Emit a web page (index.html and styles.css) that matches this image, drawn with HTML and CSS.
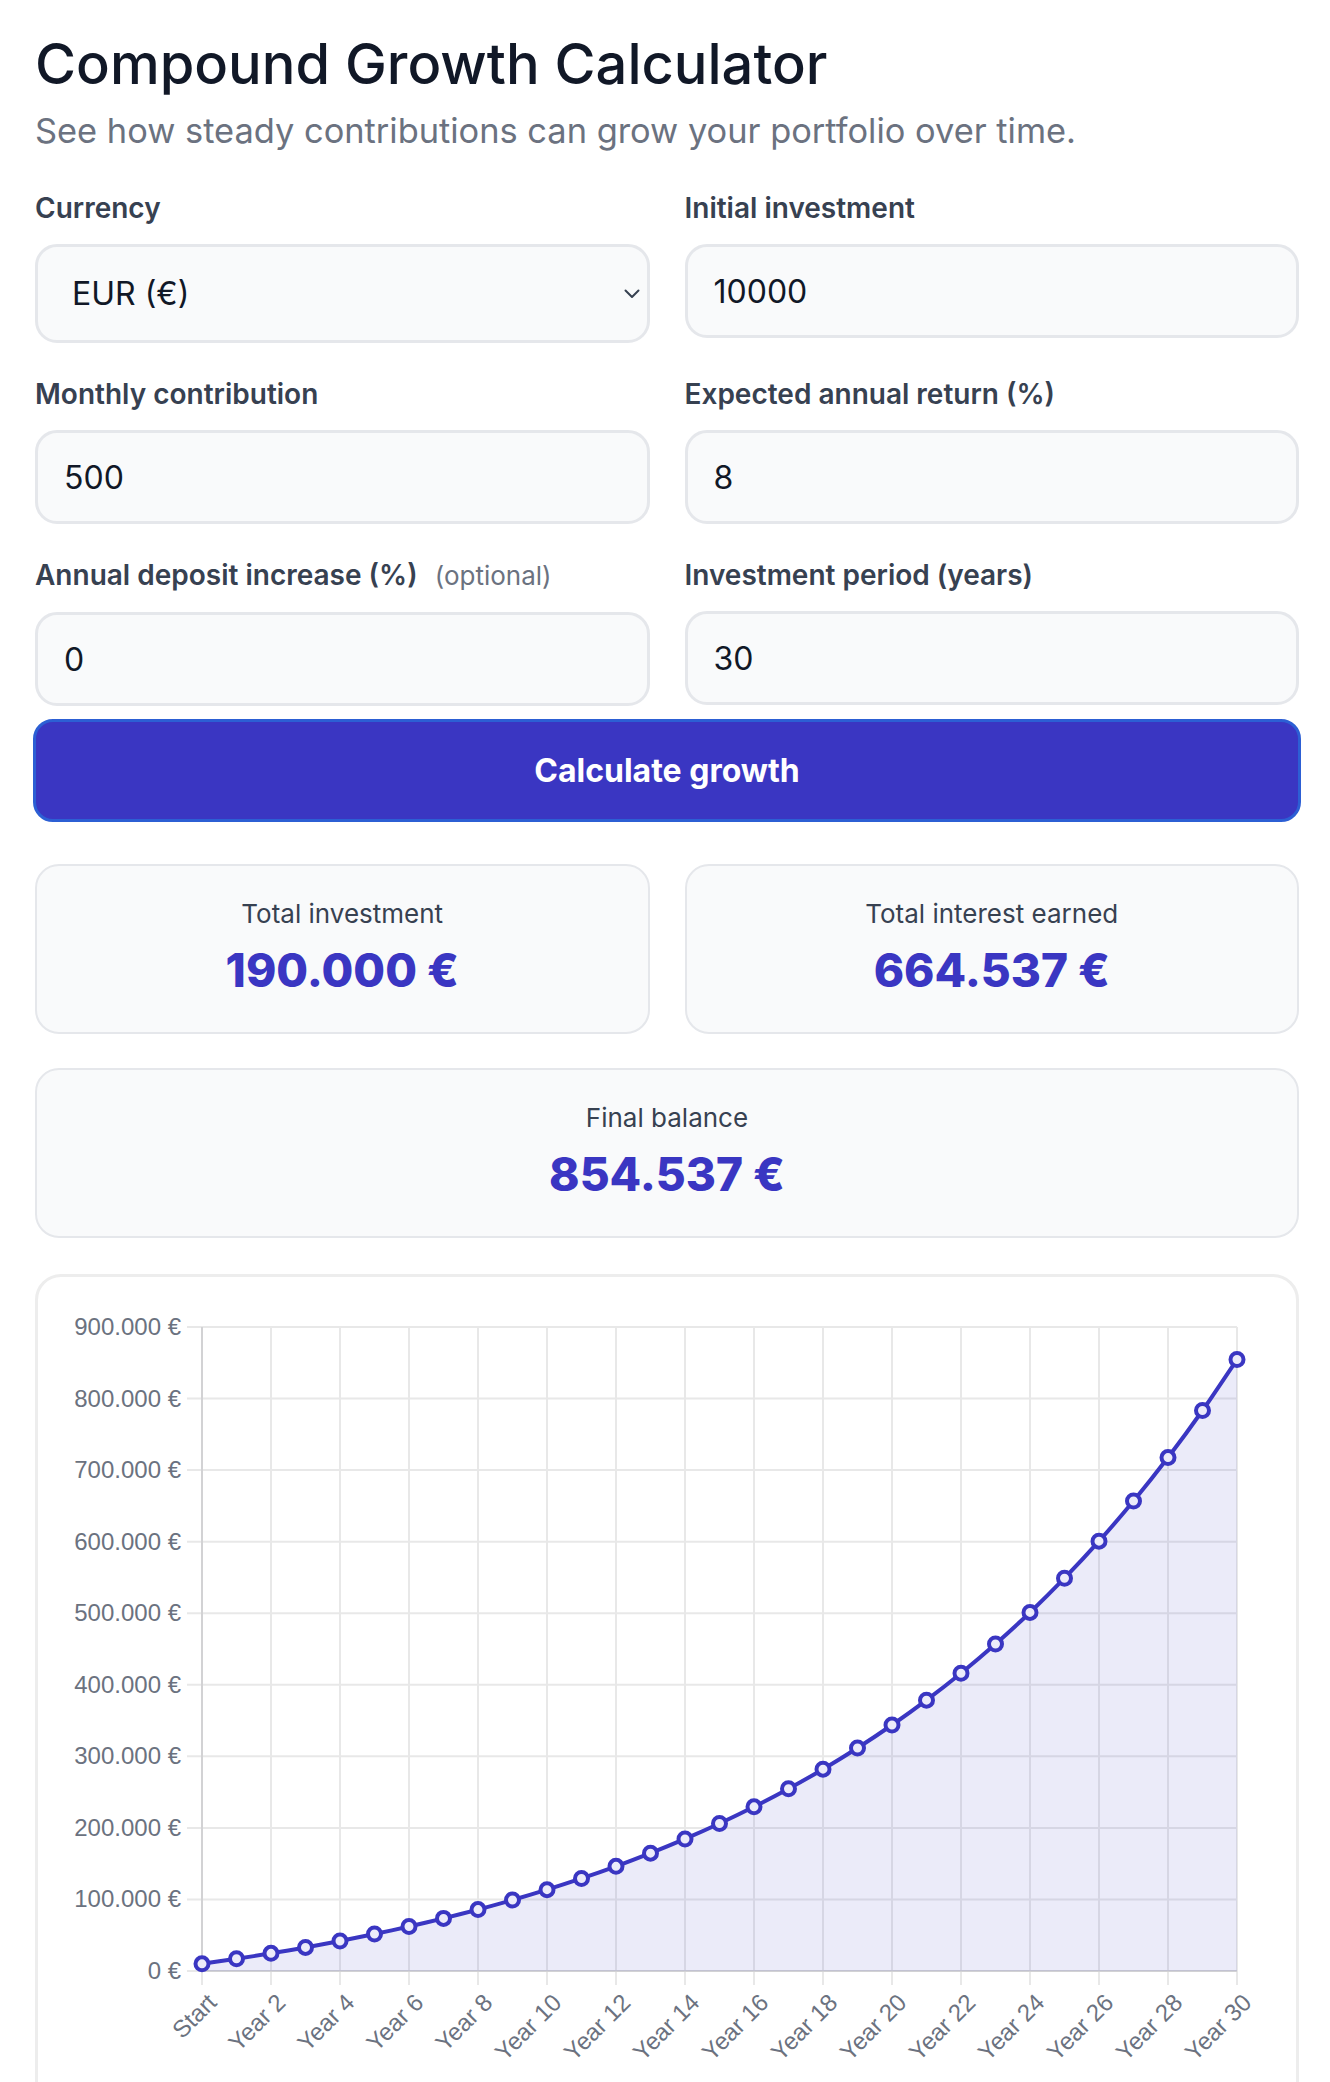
FILE: index.html
```html
<!DOCTYPE html>
<html lang="en">
<head>
  <meta charset="UTF-8">
  <title>Compound Growth Calculator</title>
  <link rel="stylesheet" href="styles.css">
</head>
<body>

<div class="page">
  <h1 class="title">Compound Growth Calculator</h1>
  <p class="subtitle">See how steady contributions can grow your portfolio over time.</p>

  <!-- Form -->
  <form class="form-grid" onsubmit="return false">
    <div class="field">
      <label for="currency">Currency</label>
      <div class="select-wrap">
        <select id="currency" class="input select">
          <option>EUR (€)</option>
          <option>USD ($)</option>
          <option>GBP (£)</option>
        </select>
        <svg class="chevron" width="16" height="10" viewBox="0 0 16 10"><path d="M1.5 1.5 L8 8 L14.5 1.5" fill="none" stroke="#374151" stroke-width="2" stroke-linecap="round" stroke-linejoin="round"/></svg>
      </div>
    </div>
    <div class="field">
      <label for="initial">Initial investment</label>
      <input id="initial" class="input" type="text" value="10000">
    </div>
    <div class="field">
      <label for="monthly">Monthly contribution</label>
      <input id="monthly" class="input" type="text" value="500">
    </div>
    <div class="field">
      <label for="rate">Expected annual return (%)</label>
      <input id="rate" class="input" type="text" value="8">
    </div>
    <div class="field">
      <label for="increase">Annual deposit increase (%) <span class="optional">(optional)</span></label>
      <input id="increase" class="input" type="text" value="0">
    </div>
    <div class="field">
      <label for="years">Investment period (years)</label>
      <input id="years" class="input" type="text" value="30">
    </div>
  </form>

  <button class="calc-btn" type="button">Calculate growth</button>

  <!-- Results -->
  <div class="results">
    <div class="stat">
      <div class="stat-label">Total investment</div>
      <div class="stat-value">190.000 €</div>
    </div>
    <div class="stat">
      <div class="stat-label">Total interest earned</div>
      <div class="stat-value">664.537 €</div>
    </div>
  </div>
  <div class="stat stat-wide">
    <div class="stat-label">Final balance</div>
    <div class="stat-value">854.537 €</div>
  </div>

  <!-- Chart -->
  <div class="chart-card">
    <svg id="chart" class="chart" width="1210" height="830" viewBox="0 0 1210 830"></svg>
  </div>
</div>

<script>
  const NS = 'http://www.w3.org/2000/svg';
  const svg = document.getElementById('chart');

  // plot area inside the svg
  const L = 140, R = 1175, T = 26, B = 670;
  const MAX = 900000;
  const YEARS = 30;

  const initial = 10000, monthly = 500, rate = 0.08 / 12;

  function el(tag, attrs, parent) {
    const node = document.createElementNS(NS, tag);
    for (let k in attrs) node.setAttribute(k, attrs[k]);
    (parent || svg).appendChild(node);
    return node;
  }

  function fmt(n) {
    return String(Math.round(n)).replace(/\B(?=(\d{3})+(?!\d))/g, '.') + ' €';
  }

  const px = i => L + i * (R - L) / YEARS;
  const py = v => B - v / MAX * (B - T);

  // balance at end of each year, monthly compounding
  let values = [];
  for (let y = 0; y <= YEARS; y++) {
    const g = Math.pow(1 + rate, y * 12);
    values.push(initial * g + monthly * (g - 1) / rate);
  }
  const pts = values.map((v, i) => ({ x: px(i), y: py(v) }));

  // horizontal grid + y labels
  for (let k = 0; k <= 9; k++) {
    const y = py(k * 100000);
    el('line', { x1: L - 15, x2: R, y1: y, y2: y, class: 'grid' });
    const t = el('text', { x: L - 21, y: y + 8, class: 'tick', 'text-anchor': 'end' });
    t.textContent = fmt(k * 100000);
  }

  // vertical grid + x labels
  for (let i = 0; i <= YEARS; i += 2) {
    const x = px(i);
    el('line', { x1: x, x2: x, y1: T, y2: B + 14, class: 'grid' });
    const t = el('text', {
      transform: `translate(${x + 16} ${B + 33}) rotate(-45)`,
      class: 'tick', 'text-anchor': 'end'
    });
    t.textContent = i === 0 ? 'Start' : 'Year ' + i;
  }

  el('line', { x1: L, x2: L, y1: T, y2: B, class: 'axis' });
  el('line', { x1: L, x2: R, y1: B, y2: B, class: 'axis' });

  // smooth line, same idea as chart.js tension
  const tension = 0.3;
  let cps = pts.map((p, i) => {
    const prev = pts[i - 1] || p, next = pts[i + 1] || p;
    const d01 = Math.hypot(p.x - prev.x, p.y - prev.y);
    const d12 = Math.hypot(next.x - p.x, next.y - p.y);
    const s01 = d01 / (d01 + d12 || 1), s12 = d12 / (d01 + d12 || 1);
    return {
      inX: p.x - tension * s01 * (next.x - prev.x),
      inY: p.y - tension * s01 * (next.y - prev.y),
      outX: p.x + tension * s12 * (next.x - prev.x),
      outY: p.y + tension * s12 * (next.y - prev.y)
    };
  });

  let d = `M${pts[0].x} ${pts[0].y}`;
  for (let i = 1; i < pts.length; i++) {
    d += ` C${cps[i - 1].outX} ${cps[i - 1].outY} ${cps[i].inX} ${cps[i].inY} ${pts[i].x} ${pts[i].y}`;
  }

  el('path', { d: d + ` L${R} ${B} L${L} ${B} Z`, class: 'area' });
  el('path', { d: d, class: 'line' });

  pts.forEach(p => el('circle', { cx: p.x, cy: p.y, r: 6.5, class: 'point' }));
</script>

</body>
</html>
```

FILE: styles.css
```css
body {
  margin: 0;
  font-family: Inter, "Noto Sans", sans-serif;
  background: #fff;
  color: #111827;
}

.page {
  padding: 31px 31px 0 35px;
}

.title {
  margin: 0;
  font-size: 56px;
  font-weight: 500;
  line-height: 1.2;
  color: #111827;
}

.subtitle {
  margin: 8px 0 0;
  font-size: 34.4px;
  line-height: 1.45;
  color: #6b7280;
}

.form-grid {
  display: grid;
  grid-template-columns: 1fr 1fr;
  column-gap: 35px;
  row-gap: 35px;
  margin-top: 36px;
}

.field label {
  display: block;
  font-size: 28px;
  font-weight: 600;
  line-height: 32px;
  color: #374151;
  margin-bottom: 20px;
}

.optional {
  margin-left: 10px;
  font-size: 26px;
  font-weight: 400;
  color: #6b7280;
}

.input {
  display: block;
  width: 100%;
  height: 94px;
  box-sizing: border-box;
  padding: 0 26px;
  border: 3px solid #e5e7eb;
  border-radius: 22px;
  background: #f9fafb;
  font-family: Inter, "Noto Sans", sans-serif;
  font-size: 32px;
  color: #111827;
  outline: none;
}

.select-wrap {
  position: relative;
}

.select {
  height: 99px;
  padding-left: 34px;
  appearance: none;
  -webkit-appearance: none;
}

.chevron {
  position: absolute;
  right: 10px;
  top: 45px;
  pointer-events: none;
}

.calc-btn {
  display: block;
  width: calc(100% + 4px);
  height: 103px;
  margin: 13px -2px 0;
  border: 3px solid #2c5fd4;
  border-radius: 20px;
  background: #3a36c2;
  color: #fff;
  font-family: Inter, "Noto Sans", sans-serif;
  font-size: 32px;
  font-weight: 700;
  cursor: pointer;
}

.results {
  display: grid;
  grid-template-columns: 1fr 1fr;
  gap: 35px;
  margin-top: 42px;
}

.stat {
  padding: 28px 20px 34px;
  border: 2px solid #e5e7eb;
  border-radius: 24px;
  background: #f9fafb;
  text-align: center;
}

.stat-wide {
  margin-top: 34px;
}

.stat-label {
  font-size: 26px;
  line-height: 40px;
  color: #374151;
}

.stat-value {
  margin-top: 8px;
  font-size: 46px;
  font-weight: 800;
  line-height: 56px;
  color: #3a36c2;
}

.chart-card {
  margin-top: 36px;
  padding: 24px;
  border: 3px solid #ededed;
  border-radius: 26px;
  background: #fff;
}

.chart {
  display: block;
}

.chart .grid {
  stroke: #e8e8e8;
  stroke-width: 2;
}

.chart .axis {
  stroke: #d2d2d4;
  stroke-width: 2;
}

.chart .area {
  fill: rgba(58, 54, 194, 0.1);
}

.chart .line {
  fill: none;
  stroke: #3a36c2;
  stroke-width: 4;
}

.chart .point {
  fill: #ecebfa;
  stroke: #3a36c2;
  stroke-width: 4;
}

.chart .tick {
  font-family: "Liberation Sans", Arial, sans-serif;
  font-size: 24px;
  fill: #6b7280;
}
```
